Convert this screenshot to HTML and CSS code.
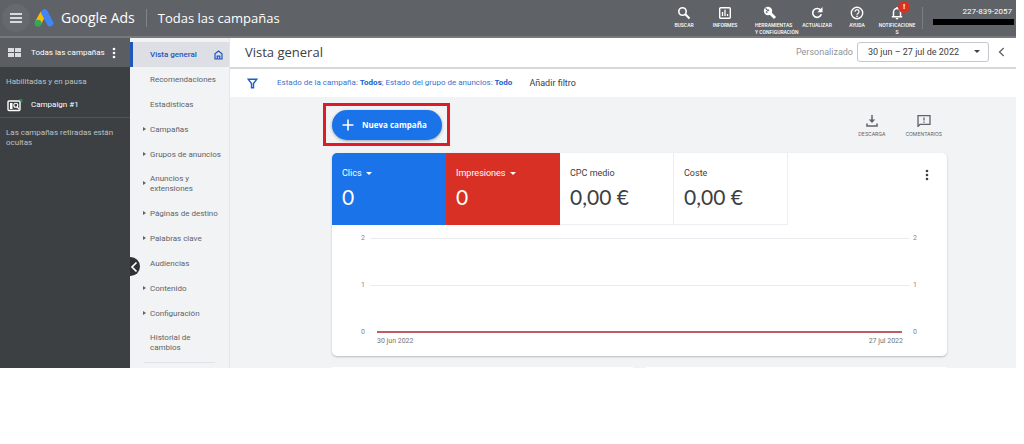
FILE: index.html
```html
<!DOCTYPE html>
<html lang="es">
<head>
<meta charset="utf-8">
<title>Google Ads - Vista general</title>
<link rel="stylesheet" href="styles.css">
</head>
<body>
<div class="app">
  <header class="topbar">
    <button class="menu-button" aria-label="Menú">
      <svg width="12" height="10" viewBox="0 0 12 10"><path d="M0 1h12M0 5h12M0 9h12" stroke="#fff" stroke-width="1.6"/></svg>
    </button>
    <a class="brand" href="#">
      <svg width="20" height="18" viewBox="0 0 20 18"><path d="M4 14L9.600 4" stroke="#fbbc04" stroke-width="6.600"/><path d="M10.500 3.500L16 14" stroke="#4285f4" stroke-width="6.600" stroke-linecap="round"/><circle cx="4" cy="14.200" r="3.400" fill="#34a853"/></svg>
      <span>Google Ads</span>
    </a>
    <h1 class="account-title">Todas las campañas</h1>
    <nav class="actions">
      <button class="action action-search"><svg width="14" height="14" viewBox="0 0 14 14"><circle cx="5.500" cy="5.500" r="3.700" fill="none" stroke="#fff" stroke-width="1.600"/><path d="M8.300 8.300L12.500 12.500" stroke="#fff" stroke-width="2"/></svg><span>BUSCAR</span></button>
      <button class="action action-reports"><svg width="14" height="14" viewBox="0 0 14 14"><rect x="1.700" y="1.700" width="10.600" height="10.600" rx="1" fill="none" stroke="#fff" stroke-width="1.400"/><path d="M4.500 10V6M7 10V3.800M9.500 10V8" stroke="#fff" stroke-width="1.300"/></svg><span>INFORMES</span></button>
      <button class="action action-tools"><svg width="14" height="14" viewBox="0 0 14 14"><path d="M6.800 6.800L12 12" stroke="#fff" stroke-width="3"/><circle cx="5" cy="5" r="4.200" fill="#fff"/><path d="M2.600 2.300L5 4.700 6 3.700M3 5.500l1.400 1.200" stroke="#5f6368" stroke-width="1.200" fill="none"/></svg><span>HERRAMIENTAS<br>Y CONFIGURACIÓN</span></button>
      <button class="action action-refresh"><svg width="14" height="14" viewBox="0 0 14 14"><path d="M10.600 4.200A4.400 4.400 0 1 0 11.300 8.300" fill="none" stroke="#fff" stroke-width="1.600"/><path d="M12.500 1v5.200H7.300z" fill="#fff"/></svg><span>ACTUALIZAR</span></button>
      <button class="action action-help"><svg width="14" height="14" viewBox="0 0 14 14"><circle cx="7" cy="7" r="5.700" fill="none" stroke="#fff" stroke-width="1.400"/><path d="M5 5.700a2 2 0 1 1 3.200 1.500C7.300 7.700 7 8 7 8.800" fill="none" stroke="#fff" stroke-width="1.200"/><circle cx="7" cy="10.400" r=".8" fill="#fff"/></svg><span>AYUDA</span></button>
      <button class="action action-alerts"><svg width="14" height="14" viewBox="0 0 14 14"><path d="M3.500 10.500V6a3.500 3.500 0 0 1 7 0v4.500M1.800 10.800h10.400M7 1v2" fill="none" stroke="#fff" stroke-width="1.500"/><path d="M5.600 12h2.800a1.400 1.400 0 0 1-2.800 0z" fill="#fff"/></svg><span>NOTIFICACIONES</span><b class="alert-badge">!</b></button>
    </nav>
    <div class="account"><span>227-839-2057</span><i class="redacted"></i></div>
  </header>

  <div class="body">
    <aside class="sidebar">
      <div class="side-head">
        <svg width="13" height="9" viewBox="0 0 13 9"><path d="M0 0h6v4H0zM7 0h6v4H7zM0 5h6v4H0zM7 5h6v4H7z" fill="#dadce0"/></svg>
        <span>Todas las campañas</span>
        <button class="dots" aria-label="Más opciones"><svg width="4" height="12" viewBox="0 0 4 12"><circle cx="2" cy="2" r="1.300"/><circle cx="2" cy="6" r="1.300"/><circle cx="2" cy="10" r="1.300"/></svg></button>
      </div>
      <p class="side-label">Habilitadas y en pausa</p>
      <a class="campaign" href="#">
        <svg width="17" height="14" viewBox="0 0 17 14"><rect x="1" y="3" width="12" height="9.500" rx="1" fill="none" stroke="#fff" stroke-width="1.400"/><path d="M3 5h2.500v6H3z" fill="#fff"/><circle cx="8.800" cy="7.300" r="2" fill="none" stroke="#fff" stroke-width="1.100"/><path d="M10 8.800l2 2.200" stroke="#fff" stroke-width="1.200"/><path d="M11.500 1H15.500V5z" fill="#1e8e3e"/></svg>
        <span>Campaign #1</span>
      </a>
      <p class="side-note">Las campañas retiradas están ocultas</p>
      <button class="collapse" aria-label="Contraer"><svg width="8" height="12" viewBox="0 0 8 12"><path d="M6.500 1.500L2 6l4.500 4.500" fill="none" stroke="#fff" stroke-width="1.700"/></svg></button>
    </aside>

    <nav class="pages">
      <a class="page current" href="#"><span>Vista general</span><svg width="9" height="10" viewBox="0 0 9 10"><path d="M1 9V3.800L4.500 1 8 3.800V9zM3.200 9V6.200h2.600V9" fill="none" stroke="#1a56c4" stroke-width="1.200"/></svg></a>
      <a class="page" href="#">Recomendaciones</a>
      <a class="page" href="#">Estadísticas</a>
      <a class="page expands" href="#">Campañas</a>
      <a class="page expands" href="#">Grupos de anuncios</a>
      <a class="page expands" href="#">Anuncios y<br>extensiones</a>
      <a class="page expands" href="#">Páginas de destino</a>
      <a class="page expands" href="#">Palabras clave</a>
      <a class="page" href="#">Audiencias</a>
      <a class="page expands" href="#">Contenido</a>
      <a class="page expands" href="#">Configuración</a>
      <a class="page" href="#">Historial de<br>cambios</a>
      <hr class="pages-rule">
    </nav>

    <main class="main">
      <div class="titlebar">
        <h2>Vista general</h2>
        <span class="range-label" id="range-label">Personalizado</span>
        <button class="range" aria-labelledby="range-label range-value"><span id="range-value">30 jun – 27 jul de 2022</span><i class="caret"></i></button>
        <button class="range-prev" aria-label="Periodo anterior"><svg width="7" height="10" viewBox="0 0 7 10"><path d="M5.700 1L1.500 5l4.200 4" fill="none" stroke="#5f6368" stroke-width="1.300"/></svg></button>
      </div>
      <div class="filters">
        <svg width="11" height="11" viewBox="0 0 11 11"><path d="M1.200 1.200h8.600L6.500 5.600v4.200h-2V5.600z" fill="none" stroke="#1a5fd0" stroke-width="1.400"/></svg>
        <a class="filter-text" href="#">Estado de la campaña: <b>Todos</b>; Estado del grupo de anuncios: <b>Todo</b></a>
        <button class="filter-add">Añadir filtro</button>
      </div>

      <div class="content">
        <div class="tools">
          <div class="highlight">
            <button class="new-campaign"><svg width="12" height="12" viewBox="0 0 12 12"><path d="M6 .5v11M.5 6h11" stroke="#fff" stroke-width="1.600"/></svg><span>Nueva campaña</span></button>
          </div>
          <div class="links">
            <button class="link"><svg width="12" height="12" viewBox="0 0 12 12"><path d="M6 0v7M1 8.500V11h10V8.500" fill="none" stroke="#5f6368" stroke-width="1.500"/><path d="M2.800 4.500h6.400L6 8z" fill="#5f6368"/></svg><span>DESCARGA</span></button>
            <button class="link"><svg width="14" height="12" viewBox="0 0 14 12"><path d="M1 11.500V.7h12v8.600H3z" fill="none" stroke="#5f6368" stroke-width="1.300"/><path d="M7 2.500v3M7 6.500v1.200" stroke="#5f6368" stroke-width="1.300"/></svg><span>COMENTARIOS</span></button>
          </div>
        </div>

        <section class="card">
          <div class="metrics">
            <button class="metric metric-blue"><span class="metric-name">Clics <i class="caret"></i></span><span class="metric-value">0</span></button>
            <button class="metric metric-red"><span class="metric-name">Impresiones <i class="caret"></i></span><span class="metric-value">0</span></button>
            <button class="metric"><span class="metric-name">CPC medio</span><span class="metric-value">0,00 €</span></button>
            <button class="metric"><span class="metric-name">Coste</span><span class="metric-value">0,00 €</span></button>
            <button class="card-menu dots" aria-label="Más opciones"><svg width="4" height="12" viewBox="0 0 4 12"><circle cx="2" cy="2" r="1.300"/><circle cx="2" cy="6" r="1.300"/><circle cx="2" cy="10" r="1.300"/></svg></button>
          </div>
          <div class="chart">
            <div class="tick"><span>2</span><i class="grid-line"></i><span>2</span></div>
            <div class="tick"><span>1</span><i class="grid-line"></i><span>1</span></div>
            <div class="tick"><span>0</span><i class="grid-line series"></i><span>0</span></div>
          </div>
          <div class="dates"><span>30 jun 2022</span><span>27 jul 2022</span></div>
        </section>
        <div class="next-cards"><i></i><i></i></div>
      </div>
    </main>
  </div>
</div>
</body>
</html>
```

FILE: styles.css
```css
* { box-sizing: border-box; }
body { margin: 0; background: #fff; color: #3c4043; font: 8px/10px Roboto, sans-serif; }
button { border: 0; padding: 0; margin: 0; background: none; font: inherit; color: inherit; text-align: left; cursor: pointer; }
a { color: inherit; text-decoration: none; }
h1, h2, p { margin: 0; font-weight: 400; }
svg { display: block; flex: none; }
.app { margin-right: 8px; }

.topbar { display: flex; align-items: center; height: 38px; padding-right: 4px; background: #5f6368; border-bottom: 2px solid #77797d; color: #fff; }
.menu-button { display: grid; place-items: center; width: 28px; height: 28px; margin-left: 2px; border-radius: 50%; background: #66696e; }
.brand { display: flex; align-items: center; gap: 7px; height: 36px; margin-left: 4px; font: 14px/18px "Open Sans", sans-serif; white-space: nowrap; }
.account-title { margin-left: 11px; padding-left: 11px; border-left: 1px solid #808387; font: 13px/18px "Open Sans", sans-serif; white-space: nowrap; }
.actions { display: flex; height: 100%; margin-left: auto; font-size: 5px; font-weight: 500; line-height: 7px; }
.action { position: relative; display: flex; flex-direction: column; align-items: center; gap: 2px; padding-top: 6px; text-align: center; width: 46px; }
.action-search { width: 40px; }
.action-reports { width: 42px; }
.action-tools { width: 48px; }
.action-tools span { align-self: flex-start; margin-left: 9px; text-align: left; white-space: nowrap; }
.action-help { width: 34px; }
.action-alerts span { width: 38px; word-break: break-all; }
.alert-badge { position: absolute; top: 1px; left: 24px; width: 12px; height: 12px; border-radius: 50%; background: #d93025; font-size: 8px; line-height: 12px; }
.account { display: flex; flex-direction: column; align-items: flex-end; gap: 2px; height: 22px; width: 90px; margin-left: 2px; border-left: 1px solid #7b7e82; white-space: nowrap; }
.redacted { width: 81px; height: 6px; margin-right: -2px; background: #000; }

.body { display: flex; align-items: stretch; }
.sidebar { position: relative; width: 130px; flex: none; background: #3c4043; color: #bdc1c6; }
.side-head { display: flex; align-items: center; height: 29px; padding-left: 8px; gap: 10px; background: #5a5d62; color: #fff; white-space: nowrap; }
.dots { fill: currentColor; }
.side-head .dots { margin-left: -3px; }
.side-label { padding: 10px 6px 5px; }
.campaign { display: flex; align-items: center; gap: 7px; height: 25px; padding-left: 7px; color: #fff; }
.side-note { padding: 10px 6px 0; border-top: 1px solid #505458; }
.collapse { position: absolute; left: 130px; top: 219px; width: 10px; height: 19px; overflow: visible; border-radius: 0 10px 10px 0; background: #2f3235; }

.pages { width: 100px; flex: none; padding: 4px 0 5px; background: #f1f3f4; border-right: 1px solid #e4e6e9; color: #5f6368; white-space: nowrap; }
.page { position: relative; display: flex; align-items: center; min-height: 25px; padding: 7px 6px 7px 20px; }
.current { justify-content: space-between; background: #dddfe4; border-left: 3px solid #2158b8; padding-left: 17px; color: #2158b8; font-weight: 500; }
.expands::before { content: ""; position: absolute; left: 13px; top: calc(50% - 3px); border: 2px solid transparent; border-left: 3px solid #5f6368; border-right: 0; }
.pages-rule { margin: 2px 14px 0; border: 0; border-top: 1px solid #e0e2e5; }

.main { flex: 1; min-width: 0; display: flex; flex-direction: column; background: #f1f3f4; }
.titlebar { display: flex; align-items: center; height: 31px; padding: 0 11px 2px 15px; background: #fff; border-bottom: 2px solid #d5d7da; white-space: nowrap; }
.titlebar h2 { font: 13px/18px "Open Sans", sans-serif; margin-right: auto; }
.range-label { color: #90949a; font-size: 9px; }
.range { display: flex; align-items: center; justify-content: space-between; width: 132px; height: 20px; margin: 0 9px 0 4px; padding: 0 8px 0 10px; border: 1px solid #c4c7cb; border-radius: 3px; font-size: 9px; }
.caret { display: inline-block; border: 3px solid transparent; border-top-color: currentColor; border-bottom: 0; vertical-align: middle; }
.filters { display: flex; align-items: center; height: 28px; padding-left: 17px; background: #fff; white-space: nowrap; }
.filter-text { margin-left: 19px; color: #3b72cf; }
.filter-text b { color: #1a5fc8; }
.filter-add { margin-left: 17px; font: 9px/10px Roboto, sans-serif; }

.content { flex: 1; display: flex; flex-direction: column; padding: 6px 69px 0 102px; }
.tools { display: flex; justify-content: space-between; align-items: center; height: 43px; margin-left: -9px; }
.highlight { padding: 4px 5px 3px 6px; border: 3px solid #e01b28; }
.new-campaign { display: flex; align-items: center; gap: 8px; height: 30px; padding: 0 15px 0 10px; border-radius: 15px; background: #1a73e8; box-shadow: 0 1px 3px #9aa4b4; color: #fff; font: bold 8px/10px "Open Sans", sans-serif; white-space: nowrap; }
.links { display: flex; gap: 20px; padding-right: 5px; color: #5f6368; font: 5px/7px Inter, sans-serif; }
.link { display: flex; flex-direction: column; align-items: center; gap: 4px; padding-top: 3px; }
.card { margin-top: 7px; height: 203px; border-radius: 5px; background: #fff; box-shadow: 0 1px 2px #b8bbbf; overflow: hidden; }
.metrics { display: flex; height: 72px; }
.metric { display: flex; flex-direction: column; width: 114px; padding: 14px 10px 0; gap: 8px; border: solid #eceef0; border-width: 0 1px 1px 0; }
.metric-blue { background: #1a73e8; border-color: #1a73e8; color: #fff; }
.metric-red { background: #d93025; border-color: #d93025; color: #fff; }
.metric-name { font-size: 9px; line-height: 12px; }
.metric-name .caret { margin-left: 2px; }
.metric-value { font: 21px/20px Lato, sans-serif; }
.card-menu { align-self: flex-start; margin: 16px 18px 0 auto; }
.chart { padding: 8px 29px 0; color: #80868b; font-size: 7px; }
.tick { display: grid; grid-template-columns: 5px 1fr 5px; column-gap: 4px; align-items: center; height: 10px; margin-bottom: 37px; }
.tick:last-child { margin-bottom: 0; }
.grid-line { border-top: 1px solid #e8eaed; }
.series { margin: 0 7px; border-top: 2px solid #bd5f62; }
.dates { display: flex; justify-content: space-between; padding: 0 44px 0 45px; color: #70757a; font-size: 7px; line-height: 9px; }
.next-cards { display: flex; gap: 13px; margin-top: auto; }
.next-cards i { flex: 1; height: 1px; background: #fff; }
```
